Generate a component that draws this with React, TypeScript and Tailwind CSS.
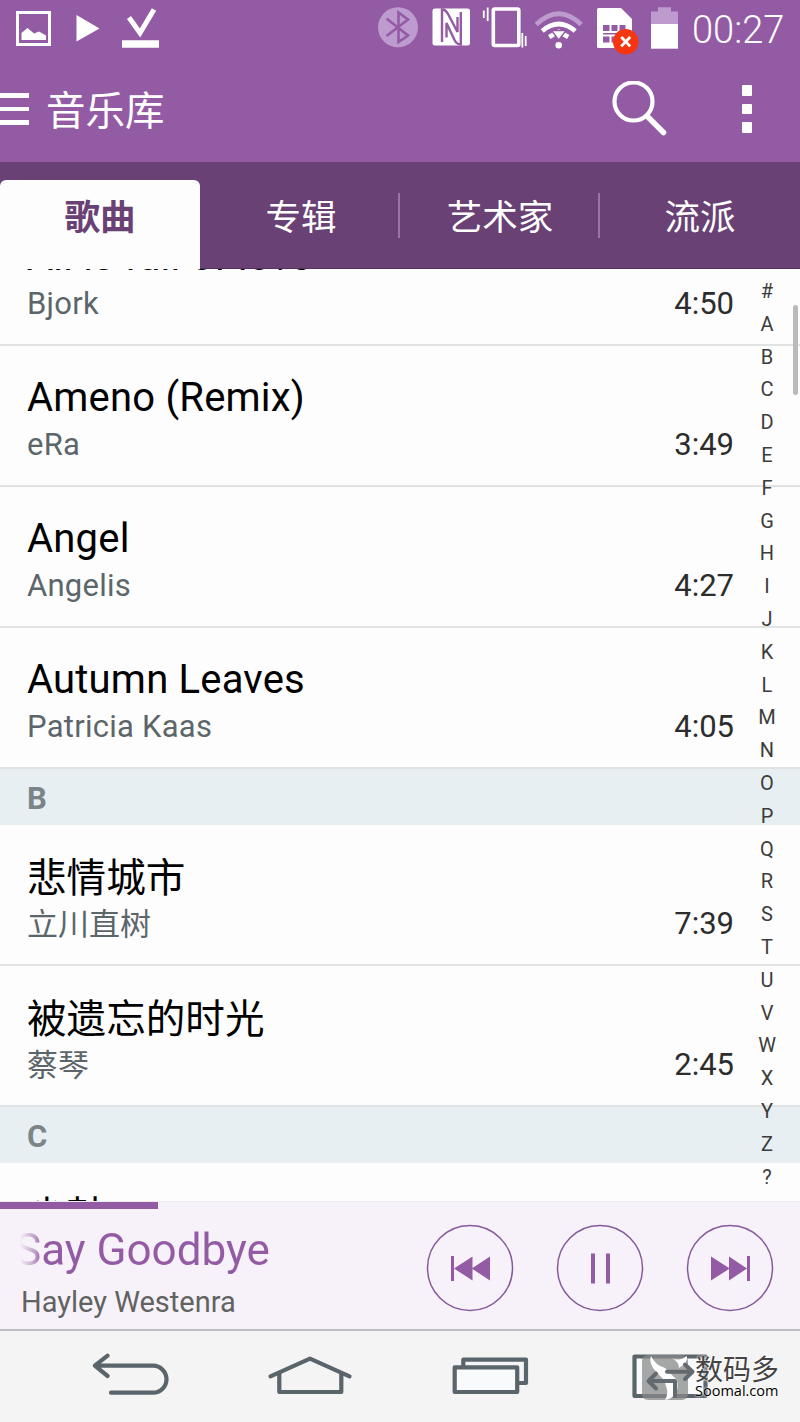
import React from 'react';

type Song = {
    title: string;
    artist: string;
    time: string;
};

const songsA: Song[] = [
    { title: 'All is full of love', artist: 'Bjork', time: '4:50' },
    { title: 'Ameno (Remix)', artist: 'eRa', time: '3:49' },
    { title: 'Angel', artist: 'Angelis', time: '4:27' },
    { title: 'Autumn Leaves', artist: 'Patricia Kaas', time: '4:05' },
];

const songsB: Song[] = [
    { title: '悲情城市', artist: '立川直树', time: '7:39' },
    { title: '被遗忘的时光', artist: '蔡琴', time: '2:45' },
];

const letters = '#ABCDEFGHIJKLMNOPQRSTUVWXYZ?'.split('');

const StatusBar = () => {
    return (
        <div className="flex h-14 items-start justify-between text-white">
            <div className="flex">
                <svg className="ml-4 h-14 w-9" viewBox="0 0 36 56" fill="none">
                    <rect x="1.5" y="12.5" width="32" height="32" stroke="currentColor" strokeWidth="3" />
                    <path d="M5.5 40V33L11.5 28L18 33.5L23 31.5L30 35.5V40Z" fill="currentColor" />
                </svg>
                <svg className="ml-6 h-14 w-6" viewBox="0 0 24 56" fill="currentColor">
                    <path d="M0.5 15V41.5L23.5 28.5Z" />
                </svg>
                <svg className="ml-5 h-14 w-10" viewBox="0 0 40 56" fill="none">
                    <path d="M9 17.5L20 33L34 9.5" stroke="currentColor" strokeWidth="5" />
                    <path d="M2 44H39" stroke="currentColor" strokeWidth="7.5" />
                </svg>
            </div>
            <div className="flex">
                <svg className="h-14 w-10" viewBox="0 0 40 56" fill="none">
                    <circle cx="20" cy="27.3" r="20" fill="#be9bce" />
                    <path d="M8.5 18.5L30 35.5L20.5 42V12.5L30 19.5L8.5 36" stroke="#945ba5" strokeWidth="2.6" />
                </svg>
                <svg className="ml-3.5 h-14 w-10" viewBox="0 0 40 56" fill="none">
                    <rect x="0.5" y="8.5" width="37.5" height="37" rx="2.5" fill="currentColor" />
                    <path d="M10 42V9.5C13.5 9.5 15 12 16 14L25.5 32V17" stroke="#945ba5" strokeWidth="2.4" />
                    <path d="M28.8 12V44.5C25.3 44.5 23.5 42 22.5 40L14.5 23V37.5" stroke="#945ba5" strokeWidth="2.4" />
                </svg>
                <svg className="ml-2.5 h-14 w-12" viewBox="0 0 48 56" fill="none" stroke="currentColor">
                    <rect x="11.3" y="9" width="25.5" height="36.5" rx="1.5" strokeWidth="3.6" />
                    <path d="M1.8 10.5V18M5.7 7.5V21" strokeWidth="1.8" />
                    <path d="M40.3 33V47.5M43.7 36V46" strokeWidth="1.8" />
                </svg>
                <svg className="ml-1 h-14 w-[50px]" viewBox="0 0 50 56" fill="none">
                    <path d="M2.3 24.5Q24.7 3 47.2 24.5" stroke="#be9bce" strokeWidth="4.6" />
                    <path d="M8.2 31Q24.7 17 41.2 31" stroke="currentColor" strokeWidth="4.6" />
                    <path d="M15.2 37L24.7 31.5L34.2 37" stroke="currentColor" strokeWidth="4.5" />
                    <path d="M17.5 30.5H32L24.7 40Z" fill="currentColor" stroke="#945ba5" strokeWidth="1.4" />
                    <circle cx="24.7" cy="45.2" r="3.3" fill="currentColor" />
                </svg>
                <svg className="ml-[13px] h-14 w-[42px]" viewBox="0 0 42 56" fill="none">
                    <path d="M0 9.5Q0 8 1.5 8H24L35 19V48H1.5Q0 48 0 46.5Z" fill="currentColor" />
                    <path d="M6 25H12.5V31H6ZM14.5 25H20.5V31H14.5ZM22.5 25H28.5V31H22.5ZM6 36.5H12.5V42.5H6ZM14.5 36.5H20V42.5H14.5ZM6 33H28V34.5H6Z" fill="#945ba5" />
                    <circle cx="28.7" cy="41.7" r="12.7" fill="#f5360f" />
                    <path d="M24.2 37L33.2 46.4M33.2 37L24.2 46.4" stroke="currentColor" strokeWidth="2.8" />
                </svg>
                <svg className="ml-3 h-14 w-[27px]" viewBox="0 0 27 56">
                    <path d="M0 11.5H7V7.3H20V11.5H27V24H0Z" fill="#be9bce" />
                    <rect y="24" width="27" height="24.7" fill="currentColor" />
                </svg>
                <span className="mr-4 ml-3.5 w-[92px] text-[38px] leading-[60px] font-light whitespace-nowrap">00:27</span>
            </div>
        </div>
    );
};

const Header = () => {
    return (
        <div className="flex h-[106px] items-center justify-between text-white">
            <div className="flex items-center">
                <div className="flex w-[29px] flex-col gap-[9px]">
                    <div className="h-[4.5px] bg-white"></div>
                    <div className="h-[4.5px] bg-white"></div>
                    <div className="h-[4.5px] bg-white"></div>
                </div>
                <h1 className="ml-[17px] pt-1.5 text-[39.5px] leading-[50px]">音乐库</h1>
            </div>
            <div className="flex items-center">
                <svg className="mr-px h-14 w-14" viewBox="0 0 56 56" fill="none" stroke="currentColor">
                    <circle cx="21.5" cy="20.5" r="19" strokeWidth="4.2" />
                    <path d="M36 36L51.5 51.5" strokeWidth="5.5" strokeLinecap="round" />
                </svg>
                <div className="mr-12 ml-[73px] flex flex-col gap-2">
                    <div className="size-[10.5px] rounded-[1px] bg-white"></div>
                    <div className="size-[10.5px] rounded-[1px] bg-white"></div>
                    <div className="size-[10.5px] rounded-[1px] bg-white"></div>
                </div>
            </div>
        </div>
    );
};

const Tabs = () => {
    return (
        <div className="grid h-[107px] grid-cols-4 border-b border-[#552f65] bg-[#694175] pt-[18px] text-center text-[35.5px] leading-[76px] text-white">
            <div className="-mb-px rounded-t-[6px] bg-[#fdfdfd] font-bold text-[#694175]">歌曲</div>
            <div className="flex items-start">
                <span className="flex-1 pl-1">专辑</span>
                <div className="mt-[13px] h-[45px] w-0.5 bg-[#9c72aa]"></div>
            </div>
            <div className="flex items-start">
                <span className="flex-1 pl-0.5">艺术家</span>
                <div className="mt-[13px] h-[45px] w-0.5 bg-[#9c72aa]"></div>
            </div>
            <div>流派</div>
        </div>
    );
};

const SongRow = ({ song, cjk }: { song: Song; cjk?: boolean }) => {
    return (
        <div className="h-[141px] shrink-0 border-b-2 border-[#e1e2e2] pt-[27px] pr-[66px] pl-[27px]">
            <p className={cjk ? 'pt-[3px] text-[39.6px] leading-[48px] text-black' : 'pt-px text-[40px] leading-[48px] tracking-[0.2px] text-black'}>{song.title}</p>
            <div className={cjk ? '-mt-[3px] flex justify-between text-[31px] leading-[47px]' : '-mt-px flex justify-between text-[31px] leading-[47px] tracking-[0.25px]'}>
                <span className={cjk ? 'pt-px text-[#5c666a]' : 'text-[#5c666a]'}>{song.artist}</span>
                <span className="tracking-normal text-[#2c2c2c]">{song.time}</span>
            </div>
        </div>
    );
};

const SectionHeader = ({ name }: { name: string }) => {
    return (
        <div className="h-14 shrink-0 bg-[#e7eff2] pl-[27px] text-[31px] leading-[60px] font-bold text-[#7b8487]">{name}</div>
    );
};

const SongList = () => {
    return (
        <div className="relative h-[932px] overflow-hidden bg-[#fdfdfd]">
            <div className="-mt-16 flex flex-col">
                {songsA.map((song) => <SongRow key={song.title} song={song} />)}
                <SectionHeader name="B" />
                {songsB.map((song) => <SongRow key={song.title} song={song} cjk />)}
                <SectionHeader name="C" />
                <SongRow song={{ title: '尘鼓', artist: '', time: '' }} cjk />
            </div>
            <div className="absolute top-[6px] right-[18px] flex w-[30px] flex-col text-center text-[20px] leading-[32.79px] text-[#3c3c3c]">
                {letters.map((letter) => <span key={letter}>{letter}</span>)}
            </div>
            <div className="absolute top-9 right-0.5 h-[90px] w-[5px] rounded-full bg-[#b9bbbb]"></div>
        </div>
    );
};

const Player = () => {
    return (
        <div className="h-[128px] border-t border-[#efecf0] bg-[#f7f2f9]">
            <div className="h-[7px] w-[158px] bg-[#945ba5]"></div>
            <div className="flex justify-between pr-[26px] pl-[21px]">
                <div>
                    {/* marquee title, faded where it scrolls out on the left */}
                    <p className="-ml-1.5 bg-[linear-gradient(90deg,transparent_5px,#945ba599_21px,#945ba5_26px)] bg-clip-text pt-[15px] text-[44px] leading-[52px] whitespace-nowrap text-transparent">Say Goodbye</p>
                    <p className="text-[29px] leading-[52px] whitespace-nowrap text-[#626262]">Hayley Westenra</p>
                </div>
                <div className="mt-[15px] flex gap-[42px] text-[#945ba5]">
                    <svg className="h-[88px] w-[88px]" viewBox="0 0 88 88" fill="currentColor">
                        <circle cx="44" cy="44" r="42.5" fill="none" stroke="#86599a" strokeWidth="1.5" />
                        <path d="M25 32H28V57H25ZM28 44.5L46.5 32.5V44L64 32.5V56.5L46.5 45V56.5Z" />
                    </svg>
                    <svg className="h-[88px] w-[88px]" viewBox="0 0 88 88" fill="currentColor">
                        <circle cx="44" cy="44" r="42.5" fill="none" stroke="#86599a" strokeWidth="1.5" />
                        <path d="M35 29.5H39V59.5H35ZM50 29.5H54V59.5H50Z" />
                    </svg>
                    <svg className="h-[88px] w-[88px]" viewBox="0 0 88 88" fill="currentColor">
                        <circle cx="44" cy="44" r="42.5" fill="none" stroke="#86599a" strokeWidth="1.5" />
                        <path d="M64 32H61V57H64ZM61 44.5L43 32.5V44L25 32.5V56.5L43 45V56.5Z" />
                    </svg>
                </div>
            </div>
        </div>
    );
};

const NavBar = () => {
    return (
        <div className="relative flex h-[93px] border-t-2 border-[#bdbdbf] bg-[#f4f4f4] pt-[19px] text-[#5a646b]">
            <svg className="ml-[90px] h-[50px] w-20" viewBox="0 0 80 50" fill="none" stroke="currentColor" strokeWidth="4.2" strokeLinecap="round" strokeLinejoin="round">
                <path d="M17.6 5.7L4.8 15.7L17.6 26M5 15.7H63A13.5 13.5 0 0 1 63 42.7H21" />
            </svg>
            <svg className="ml-24 h-[50px] w-[88px]" viewBox="0 0 88 50" fill="none" stroke="currentColor" strokeWidth="4.2" strokeLinecap="round" strokeLinejoin="round">
                <path d="M13.3 23V42H75.3V23" />
                <path d="M4.5 26.3L44 8.7L83.5 26.3" />
            </svg>
            <svg className="ml-24 h-[50px] w-20" viewBox="0 0 80 50" fill="none" stroke="currentColor" strokeWidth="4.2" strokeLinejoin="round">
                <path d="M13.3 17.3V9.7H76V33H68" />
                <rect x="4.7" y="17.3" width="62.5" height="24.7" fill="#f8fafc" />
            </svg>
            <svg className="ml-[100px] h-[52px] w-20" viewBox="0 0 80 52" fill="none" stroke="currentColor" strokeWidth="4.2" strokeLinejoin="round" strokeLinecap="round">
                <rect x="4.5" y="6.5" width="71" height="39.5" fill="#f8fafc" />
            </svg>
            <div className="absolute top-[22px] left-[641px] flex text-[#444444]">
                <svg className="h-[48px] w-[56px]" viewBox="0 0 56 48" fill="none">
                    <rect x="1" y="2" width="46" height="45" rx="6" fill="#8a8a8a" fillOpacity="0.75" />
                    <path d="M10 3Q14 12 24 15L36 27Q38 36 34 41Q31 46 24 47Q28 40 25 33L23 27Q17 21 12 15Q8 8 10 3Z" fill="#ffffff" />
                    <path d="M31 5Q38 9 46 3Q47 10 38 15Q38 9 31 5Z" fill="#ffffff" />
                    <g stroke="#646b70" strokeWidth="4" strokeLinecap="round" strokeLinejoin="round">
                        <path d="M34 43V28H8M15 20.5L7.5 28L15 35.5" />
                        <path d="M26 18.7H51M44 11.5L51.5 18.7L44 26" />
                    </g>
                </svg>
                <div className="-ml-0.5 [text-shadow:0_0_3px_white,0_0_2px_white]">
                    <p className="pt-1 text-[28px] leading-[28px]">数码多</p>
                    <p className="font-['Open_Sans'] text-[14.5px] leading-[12px] text-black">Soomal.com</p>
                </div>
            </div>
        </div>
    );
};

const App = () => {
    return (
        <div className="flex h-[1422px] w-[800px] flex-col overflow-hidden bg-[#945ba5] font-[Roboto,'Noto_Sans_CJK_SC',sans-serif]">
            <StatusBar />
            <Header />
            <Tabs />
            <SongList />
            <Player />
            <NavBar />
        </div>
    );
};

export default App;
